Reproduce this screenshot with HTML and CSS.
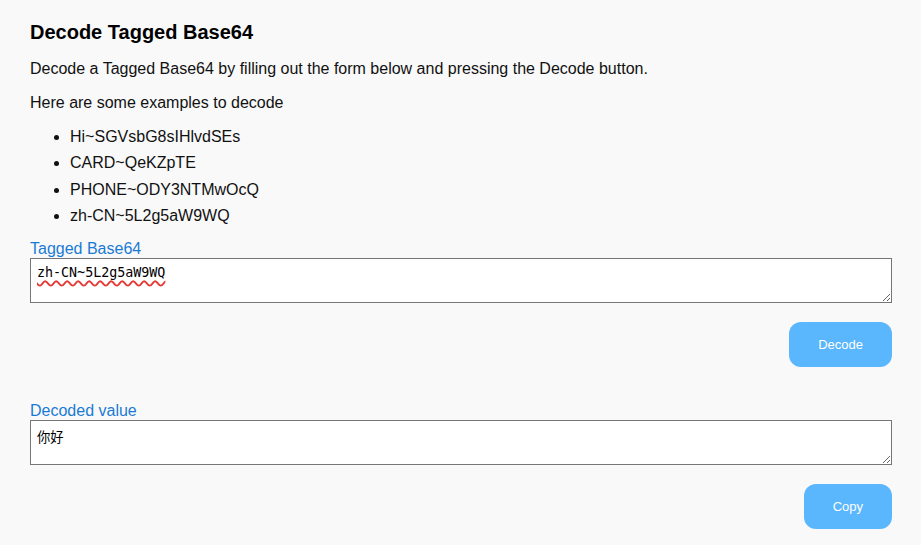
FILE: index.html
```html
<!DOCTYPE html>
<html lang="en">
<head>
<meta charset="utf-8">
<title>Decode Tagged Base64</title>
<link rel="stylesheet" href="styles.css">
</head>
<body>
<main class="page">
  <h1 class="title">Decode Tagged Base64</h1>
  <p class="text">Decode a Tagged Base64 by filling out the form below and pressing the Decode button.</p>
  <p class="text">Here are some examples to decode</p>
  <ul class="examples">
    <li>Hi~SGVsbG8sIHlvdSEs</li>
    <li>CARD~QeKZpTE</li>
    <li>PHONE~ODY3NTMwOcQ</li>
    <li>zh-CN~5L2g5aW9WQ</li>
  </ul>
  <label class="field-label" for="input">Tagged Base64</label>
  <textarea id="input" class="field field-input" spellcheck="false">zh-CN~5L2g5aW9WQ</textarea>
  <div class="actions">
    <button class="btn" type="button">Decode</button>
  </div>
  <label class="field-label field-label-spaced" for="output">Decoded value</label>
  <textarea id="output" class="field" spellcheck="false">你好</textarea>
  <div class="actions">
    <button class="btn" type="button">Copy</button>
  </div>
</main>
</body>
</html>
```

FILE: styles.css
```css
html, body {
  margin: 0;
  background: #f9f9f9;
}

body {
  font-family: "Liberation Sans", Arial, "Noto Sans CJK SC", sans-serif;
  font-size: 16px;
  color: #111;
}

.page {
  padding: 0 29px 0 30px;
  display: flex;
  flex-direction: column;
}

.title {
  font-size: 20px;
  font-weight: bold;
  color: #000;
  margin: 21px 0 16px;
  line-height: 23px;
}

.text {
  margin: 0 0 16px;
  line-height: 18px;
}

.examples {
  margin: 0 0 13px;
  padding-left: 40px;
}

.examples li {
  line-height: 18.4px;
  margin-bottom: 8px;
}

.examples li:last-child {
  margin-bottom: 0;
}

.field-label {
  display: block;
  color: #1a7bd5;
  line-height: 19px;
}

.field-label-spaced {
  margin-top: 34px;
}

.field {
  display: block;
  box-sizing: border-box;
  width: 100%;
  height: 45px;
  margin: 0;
  padding: 6px 6px;
  border: 1px solid #767676;
  border-radius: 0;
  background: #fff;
  color: #000;
  font-family: "DejaVu Sans Mono", "Noto Sans CJK SC", monospace;
  font-size: 13.333px;
  resize: vertical;
}

.field-input {
  text-decoration: underline wavy #e53935;
  text-decoration-thickness: 1.5px;
  text-underline-offset: 3px;
}

.actions {
  display: flex;
  justify-content: flex-end;
  margin-top: 19px;
}

.btn {
  height: 45px;
  padding: 0 29px;
  border: none;
  border-radius: 12px;
  background: #5ab6fd;
  color: #fff;
  font-family: "Liberation Sans", Arial, sans-serif;
  font-size: 13px;
  cursor: pointer;
}
```
